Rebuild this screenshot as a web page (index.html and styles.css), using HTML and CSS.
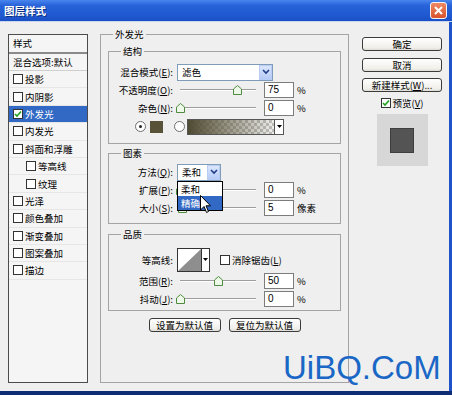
FILE: index.html
```html
<!DOCTYPE html>
<html lang="zh-CN">
<head>
    <meta charset="UTF-8">
    <title>图层样式</title>
    <link rel="stylesheet" href="styles.css">
</head>
<body>
<div class="window">
    <div class="titlebar">
        <span class="title">图层样式</span>
        <span class="close">
            <svg width="9" height="9" viewBox="0 0 9 9"><path d="M1 1 L8 8 M8 1 L1 8" stroke="#fff" stroke-width="2"/></svg>
        </span>
    </div>

    <div class="dialog">
        <!-- style list -->
        <div class="style-list">
            <div class="list-head">样式</div>
            <div class="list-row blend">混合选项:默认</div>
            <div class="list-row"><span class="check"></span>投影</div>
            <div class="list-row"><span class="check"></span>内阴影</div>
            <div class="list-row selected"><span class="check on"><svg width="8" height="8" viewBox="0 0 8 8"><path d="M1 4 L3 6 L7 1.5" fill="none" stroke="#21a121" stroke-width="1.6"/></svg></span>外发光</div>
            <div class="list-row"><span class="check"></span>内发光</div>
            <div class="list-row"><span class="check"></span>斜面和浮雕</div>
            <div class="list-row sub"><span class="check"></span>等高线</div>
            <div class="list-row sub"><span class="check"></span>纹理</div>
            <div class="list-row"><span class="check"></span>光泽</div>
            <div class="list-row"><span class="check"></span>颜色叠加</div>
            <div class="list-row"><span class="check"></span>渐变叠加</div>
            <div class="list-row"><span class="check"></span>图案叠加</div>
            <div class="list-row"><span class="check"></span>描边</div>
        </div>

        <!-- main settings -->
        <fieldset class="group outer">
            <legend>外发光</legend>

            <fieldset class="group inner g-struct">
                <legend>结构</legend>
                <div class="row">
                    <label>混合模式(<u>E</u>):</label>
                    <div class="select mode">滤色<span class="arrow"><svg width="8" height="6" viewBox="0 0 8 6"><path d="M1 1 L4 4 L7 1" fill="none" stroke="#1f3c86" stroke-width="1.6"/></svg></span></div>
                </div>
                <div class="row">
                    <label>不透明度(<u>O</u>):</label>
                    <div class="slider"><span class="thumb" style="left: 75%"><svg width="9" height="10" viewBox="0 0 9 10"><path d="M0.5 4 L4.5 0.5 L8.5 4 V9.5 H0.5 Z" fill="#eef8e8" stroke="#4f8a40"/></svg></span></div>
                    <span class="num">75</span><span class="unit">%</span>
                </div>
                <div class="row">
                    <label>杂色(<u>N</u>):</label>
                    <div class="slider"><span class="thumb" style="left: 0%"><svg width="9" height="10" viewBox="0 0 9 10"><path d="M0.5 4 L4.5 0.5 L8.5 4 V9.5 H0.5 Z" fill="#eef8e8" stroke="#4f8a40"/></svg></span></div>
                    <span class="num">0</span><span class="unit">%</span>
                </div>
                <div class="row colors">
                    <span class="radio on"></span>
                    <span class="swatch"></span>
                    <span class="radio"></span>
                    <span class="gradient"><span class="grad-arrow"><svg width="5" height="3" viewBox="0 0 5 3"><path d="M0 0 H5 L2.5 3 Z" fill="#000"/></svg></span></span>
                </div>
            </fieldset>

            <fieldset class="group inner g-elem">
                <legend>图素</legend>
                <div class="row">
                    <label>方法(<u>Q</u>):</label>
                    <div class="select method">柔和<span class="arrow"><svg width="8" height="6" viewBox="0 0 8 6"><path d="M1 1 L4 4 L7 1" fill="none" stroke="#1f3c86" stroke-width="1.6"/></svg></span>
                        <div class="popup">
                            <div class="opt">柔和</div>
                            <div class="opt active">精确</div>
                            <svg class="cursor" width="12" height="19" viewBox="0 0 12 19"><path d="M0.5 0.5 V15 L4 11.5 L6.5 17.5 L8.5 16.5 L6 10.8 H10.5 Z" fill="#fff" stroke="#000"/></svg>
                        </div>
                    </div>
                </div>
                <div class="row">
                    <label>扩展(<u>P</u>):</label>
                    <div class="slider"><span class="thumb" style="left: 0%"><svg width="9" height="10" viewBox="0 0 9 10"><path d="M0.5 4 L4.5 0.5 L8.5 4 V9.5 H0.5 Z" fill="#eef8e8" stroke="#4f8a40"/></svg></span></div>
                    <span class="num">0</span><span class="unit">%</span>
                </div>
                <div class="row">
                    <label>大小(<u>S</u>):</label>
                    <div class="slider"><span class="thumb" style="left: 3%"><svg width="9" height="10" viewBox="0 0 9 10"><path d="M0.5 4 L4.5 0.5 L8.5 4 V9.5 H0.5 Z" fill="#eef8e8" stroke="#4f8a40"/></svg></span></div>
                    <span class="num">5</span><span class="unit">像素</span>
                </div>
            </fieldset>

            <fieldset class="group inner g-quality">
                <legend>品质</legend>
                <div class="row contour-row">
                    <label>等高线:</label>
                    <div class="contour">
                        <span class="curve"><svg width="23" height="22" viewBox="0 0 23 22"><path d="M0 22 L23 0 V22 Z" fill="#8e8e8e"/></svg></span>
                        <span class="curve-arrow"><svg width="5" height="3" viewBox="0 0 5 3"><path d="M0 0 H5 L2.5 3 Z" fill="#000"/></svg></span>
                    </div>
                    <span class="check aa"></span><span class="aa-text">消除锯齿(<u>L</u>)</span>
                </div>
                <div class="row">
                    <label>范围(<u>R</u>):</label>
                    <div class="slider"><span class="thumb" style="left: 50%"><svg width="9" height="10" viewBox="0 0 9 10"><path d="M0.5 4 L4.5 0.5 L8.5 4 V9.5 H0.5 Z" fill="#eef8e8" stroke="#4f8a40"/></svg></span></div>
                    <span class="num">50</span><span class="unit">%</span>
                </div>
                <div class="row">
                    <label>抖动(<u>J</u>):</label>
                    <div class="slider"><span class="thumb" style="left: 0%"><svg width="9" height="10" viewBox="0 0 9 10"><path d="M0.5 4 L4.5 0.5 L8.5 4 V9.5 H0.5 Z" fill="#eef8e8" stroke="#4f8a40"/></svg></span></div>
                    <span class="num">0</span><span class="unit">%</span>
                </div>
            </fieldset>

            <div class="defaults">
                <span class="btn small">设置为默认值</span>
                <span class="btn small">复位为默认值</span>
            </div>
        </fieldset>

        <!-- buttons -->
        <div class="side">
            <span class="btn">确定</span>
            <span class="btn">取消</span>
            <span class="btn">新建样式(<u>W</u>)...</span>
            <div class="preview-check"><span class="check on"><svg width="8" height="8" viewBox="0 0 8 8"><path d="M1 4 L3 6 L7 1.5" fill="none" stroke="#21a121" stroke-width="1.6"/></svg></span>预览(<u>V</u>)</div>
            <div class="preview"><span class="preview-square"></span></div>
        </div>

        <div class="watermark">UiBQ.CoM</div>
    </div>
</div>
</body>
</html>
```

FILE: styles.css
```css
body {
    margin: 0;
    width: 452px;
    height: 395px;
    overflow: hidden;
    font-family: "Noto Sans CJK SC", sans-serif;
    font-size: 9.5px;
    color: #000;
}
u {
    text-decoration: underline;
}
.window {
    height: 395px;
    display: flex;
    flex-direction: column;
    background: #1d52c9; /* window frame */
    border-bottom: 4px solid #0e2d74;
    box-sizing: border-box;
}
.titlebar {
    height: 21px;
    display: flex;
    align-items: center;
    justify-content: space-between;
    padding: 0 5px 0 4px;
    background: linear-gradient(#4a86ee, #2863d9 25%, #1f58d0 75%, #1a4fc4);
    border-bottom: 1px solid #c8d6f0;
}
.title {
    color: #fff;
    font-weight: bold;
    font-size: 10.5px;
    text-shadow: 1px 1px 0 #0b2f80;
}
.close {
    width: 17px;
    height: 17px;
    box-sizing: border-box;
    border: 1px solid #f4f4f4;
    border-radius: 3px;
    background: linear-gradient(#ee8a64, #d9522a);
    display: flex;
    align-items: center;
    justify-content: center;
}
.dialog {
    flex: 1;
    position: relative;
    display: flex;
    align-items: flex-start;
    padding: 5px 0 0 8px;
    margin-right: 3px;
    background: #efefef;
}

/* style list */
.style-list {
    width: 80px;
    height: 349px;
    margin-top: 7px;
    box-sizing: border-box;
    border: 1px solid #4c4c4c;
    background: #f5f5f5;
}
.list-head {
    height: 19px;
    box-sizing: border-box;
    padding-left: 4px;
    line-height: 17px;
    border-bottom: 2px solid #8a8a8a;
}
.list-row {
    height: 17.4px;
    box-sizing: border-box;
    display: flex;
    align-items: center;
    padding-left: 4px;
    border-bottom: 1px solid #e6e6e6;
}
.list-row.blend {
    height: 17px;
    border-bottom: 1px solid #cfcfcf;
}
.list-row.sub {
    padding-left: 17px;
}
.list-row.selected {
    background: #3169c4;
    color: #fff;
}
.check {
    width: 10px;
    height: 10px;
    box-sizing: border-box;
    border: 1px solid #333;
    background: #fff;
    margin-right: 2px;
    display: inline-flex;
    align-items: center;
    justify-content: center;
    flex: none;
}

/* group boxes */
.group {
    margin: 0;
    border: 1px solid #a4a4a4;
    min-width: 0;
    box-sizing: border-box;
}
.group legend {
    padding: 0 2px;
    line-height: 14px;
}
.outer {
    width: 249px;
    height: 356px;
    margin-left: 12px;
    padding: 0 7px;
}
.outer > legend {
    margin-left: 5px;
}
.inner {
    padding: 0;
}
.inner > legend {
    margin-left: 12px;
}
.g-struct {
    margin-top: 3px;
    padding: 5px 0 7px;
}
.g-elem {
    margin-top: 2px;
    padding: 3px 0 6px;
}
.g-quality {
    margin-top: 3px;
    padding: 6px 0 2px;
}
.row {
    height: 18px;
    display: flex;
    align-items: center;
}
.row label {
    width: 64px;
    text-align: right;
    margin-right: 4px;
    flex: none;
}
.select {
    position: relative;
    height: 17px;
    box-sizing: border-box;
    border: 1px solid #7f9db9;
    background: #fff;
    display: flex;
    align-items: center;
    padding-left: 4px;
}
.select.mode {
    width: 96px;
}
.select.method {
    width: 44px;
}
.select .arrow {
    margin-left: auto;
    width: 13px;
    height: 15px;
    box-sizing: border-box;
    border: 1px solid #b9cdf4;
    background: linear-gradient(#dbe6fd, #b6cbf6);
    display: flex;
    align-items: center;
    justify-content: center;
}
.popup {
    position: absolute;
    top: 16px;
    left: -1px;
    width: 44px;
    border: 1px solid #000;
    background: #fff;
    z-index: 2;
}
.opt {
    height: 14px;
    line-height: 14px;
    padding-left: 3px;
}
.opt.active {
    background: #3169c4;
    color: #fff;
}
.cursor {
    position: absolute;
    left: 22px;
    top: 13px;
}
.slider {
    width: 76px;
    height: 12px;
    margin: 0 3px;
    position: relative;
}
.slider::before {
    content: "";
    position: absolute;
    left: 0;
    right: 0;
    top: 5px;
    border-top: 1px solid #9d9d9d;
    border-bottom: 1px solid #fff;
}
.thumb {
    position: absolute;
    top: 1px;
    margin-left: -4px;
    display: flex;
}
.num {
    width: 30px;
    height: 16px;
    box-sizing: border-box;
    margin-left: 5px;
    border: 1px solid #7c7c7c;
    background: #fff;
    padding-left: 3px;
    font-family: "Liberation Sans", sans-serif;
    font-size: 10px;
    line-height: 14px;
}
.unit {
    margin-left: 3px;
}
.row.colors {
    height: 19px;
    padding-left: 26px;
}
.radio {
    width: 11px;
    height: 11px;
    box-sizing: border-box;
    border: 1px solid #6f6f6f;
    border-radius: 50%;
    background: #fff;
    margin-right: 4px;
    display: flex;
    align-items: center;
    justify-content: center;
}
.radio.on::after {
    content: "";
    width: 3px;
    height: 3px;
    border-radius: 50%;
    background: #222;
}
.radio + .radio,
.swatch + .radio {
    margin-right: 2px;
}
.swatch {
    width: 13px;
    height: 12px;
    background: #575238;
    margin-right: 11px;
}
.gradient {
    width: 97px;
    height: 16px;
    box-sizing: border-box;
    border: 1px solid #555;
    display: flex;
    justify-content: flex-end;
    background:
        linear-gradient(to right, #4f4a32, rgba(90, 85, 60, 0.75) 30%, rgba(90, 85, 60, 0) 100%),
        repeating-conic-gradient(#c9c9c9 0 25%, #fff 0 50%) 0 0 / 6px 6px;
}
.grad-arrow {
    width: 8px;
    background: #fff;
    border-left: 1px solid #555;
    display: flex;
    align-items: center;
    justify-content: center;
}
.row.contour-row {
    height: 25px;
}
.contour {
    display: flex;
    height: 24px;
}
.curve {
    width: 25px;
    box-sizing: border-box;
    border: 1px solid #333;
    background: #fff;
    display: flex;
}
.curve-arrow {
    width: 8px;
    box-sizing: border-box;
    border: 1px solid #333;
    border-left: none;
    background: #fff;
    display: flex;
    align-items: center;
    justify-content: center;
}
.check.aa {
    margin-left: 10px;
}
.g-quality .row + .row {
    margin-top: 0;
}
.contour-row + .row {
    margin-top: 3px;
}
.defaults {
    display: flex;
    justify-content: center;
    gap: 8px;
    margin-top: 7px;
}

/* buttons */
.btn {
    width: 80px;
    height: 14px;
    box-sizing: border-box;
    border: 1px solid #3b3b3b;
    border-radius: 3px;
    background: linear-gradient(#ffffff, #f0efea 80%, #dedcd4);
    display: flex;
    align-items: center;
    justify-content: center;
    line-height: 12px;
}
.btn.small {
    width: 72px;
}
.side {
    width: 80px;
    margin-left: 13px;
    margin-top: 10px;
    display: flex;
    flex-direction: column;
    align-items: center;
    gap: 6.5px;
}
.preview-check {
    height: 14px;
    display: flex;
    align-items: center;
    margin-top: -2.5px;
}
.preview {
    width: 51px;
    height: 52px;
    margin-top: -2.5px;
    background: #d7d7d7;
    display: flex;
    align-items: center;
    justify-content: center;
}
.preview-square {
    width: 24px;
    height: 25px;
    box-sizing: border-box;
    border: 1px solid #3e3e3e;
    background: #545454;
}
.watermark {
    position: absolute;
    left: 283px;
    top: 327px;
    font-family: "Liberation Sans", sans-serif;
    font-size: 33px;
    line-height: 38px;
    color: #1a67c6;
}
```
